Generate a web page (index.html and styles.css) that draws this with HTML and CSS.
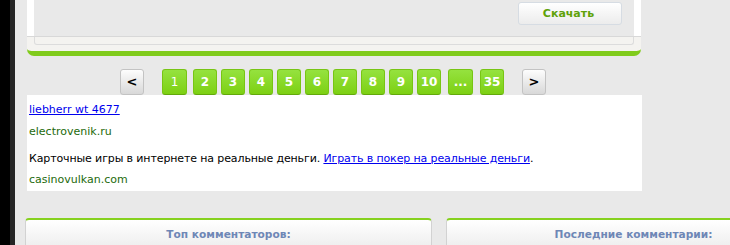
FILE: index.html
```html
<!DOCTYPE html>
<html lang="ru">
<head>
<meta charset="utf-8">
<title>Page</title>
<link rel="stylesheet" href="styles.css">
</head>
<body>
<div class="page">
  <div class="edge"></div>
  <div class="main">
    <div class="panel">
      <div class="panel-body">
        <a class="btn-download" href="#">Скачать</a>
      </div>
      <div class="panel-foot"><div class="panel-foot-box"></div></div>
    </div>

    <div class="pager">
      <a class="pg pg-nav" href="#">&lt;</a>
      <span class="pg pg-green pg-current pg-wide">1</span>
      <a class="pg pg-green pg-after-current" href="#">2</a>
      <a class="pg pg-green" href="#">3</a>
      <a class="pg pg-green" href="#">4</a>
      <a class="pg pg-green" href="#">5</a>
      <a class="pg pg-green" href="#">6</a>
      <a class="pg pg-green" href="#">7</a>
      <a class="pg pg-green" href="#">8</a>
      <a class="pg pg-green" href="#">9</a>
      <a class="pg pg-green" href="#">10</a>
      <span class="pg pg-green pg-dots pg-wide">...</span>
      <a class="pg pg-green pg-spaced" href="#">35</a>
      <a class="pg pg-nav pg-next" href="#">&gt;</a>
    </div>

    <div class="ads">
      <div class="ad">
        <div class="ad-title"><a href="#">liebherr wt 4677</a></div>
        <div class="ad-url">electrovenik.ru</div>
      </div>
      <div class="ad ad-second">
        <div class="ad-title ad-text">Карточные игры в интернете на реальные деньги. <a href="#">Играть в покер на реальные деньги</a>.</div>
        <div class="ad-url">casinovulkan.com</div>
      </div>
    </div>

    <div class="widgets">
      <div class="widget widget-left">
        <div class="widget-title">Топ комментаторов:</div>
      </div>
      <div class="widget widget-right">
        <div class="widget-title">Последние комментарии:</div>
      </div>
    </div>
  </div>
</div>
</body>
</html>
```

FILE: styles.css
```css
html, body {
  margin: 0;
  padding: 0;
  overflow: hidden;
  height: 100%;
}
body {
  background: #e9e9e9;
  font-family: "DejaVu Sans", Verdana, sans-serif;
  font-size: 11px;
  color: #000;
}
.page {
  display: flex;
  min-height: 100%;
}
.edge {
  width: 5px;
  flex: none;
  background: #252525;
  border-left: 10px solid #000;
}
.main {
  flex: none;
  width: 820px;
  padding-left: 10px;
}

/* top panel */
.panel {
  margin-left: 2px;
  width: 614px;
  background: #f4f3f0;
  border-bottom: 5px solid #80cb1c;
  border-radius: 0 0 7px 7px;
}
.panel-body {
  height: 36px;
  box-sizing: border-box;
  background: #e9e9e9;
  border-left: 7px solid #fff;
  border-right: 7px solid #fff;
  display: flex;
  justify-content: flex-end;
  align-items: flex-start;
  padding: 2px 12px 0 0;
}
.panel-foot {
  border-top: 1px solid #d8d8d8;
  height: 15px;
  box-sizing: border-box;
  padding: 0 7px 0 7px;
}
.panel-foot-box {
  height: 7px;
  border: 1px solid #dcdcdc;
  border-top: none;
  border-radius: 0 0 3px 3px;
}
.btn-download {
  display: block;
  width: 104px;
  height: 23px;
  box-sizing: border-box;
  border: 1px solid #d6dce3;
  border-radius: 3px;
  background: linear-gradient(#ffffff, #ececec);
  color: #5fa20a;
  font-weight: bold;
  font-size: 11px;
  line-height: 21px;
  text-align: center;
  text-decoration: none;
  padding-right: 3px;
}

/* pagination */
.pager {
  display: flex;
  margin-top: 13px;
  margin-left: 2px;
  padding-left: 93px;
  gap: 4px;
  height: 26px;
}
.pg {
  display: block;
  flex: none;
  width: 24px;
  height: 26px;
  box-sizing: border-box;
  border-radius: 3px;
  text-align: center;
  line-height: 24px;
  text-decoration: none;
  font-weight: bold;
  font-size: 12px;
}
.pg-green {
  color: #fff;
  background: linear-gradient(#95e23f, #7dd013);
  border: 1px solid #78c514;
  border-bottom-color: #62a90b;
}
.pg-current {
  font-weight: normal;
  margin-left: 14px;
}
.pg-wide {
  width: 25px;
}
.pg-after-current {
  margin-left: 2px;
}
.pg-dots {
  margin-left: 3px;
}
.pg-spaced {
  margin-left: 3px;
}
.pg-nav {
  color: #000;
  background: linear-gradient(#fdfdfd, #d8d8d8);
  border: 1px solid #c3c3c3;
  font-size: 13px;
}
.pg-next {
  margin-left: 14px;
}

/* ads */
.ads {
  margin-left: 2px;
  width: 615px;
  background: #fff;
  padding: 6px 0 2px 2px;
  box-sizing: border-box;
}
.ad-second {
  margin-top: 9px;
}
.ad-title {
  line-height: 18px;
}
.ad-text {
  letter-spacing: -0.12px;
}
.ad-title a {
  color: #0000ee;
}
.ad-url {
  margin-top: 4px;
  line-height: 18px;
  color: #1d6a0b;
}
.ad-second .ad-url {
  margin-top: 3px;
}

/* widgets */
.widgets {
  display: flex;
  gap: 14px;
  margin-top: 27px;
}
.widget {
  flex: none;
  height: 40px;
  box-sizing: border-box;
  border: 1px solid #d2d2d2;
  border-top: 2px solid #86d11f;
  border-radius: 4px 4px 0 0;
  background: linear-gradient(#ffffff, #ececec 30px);
}
.widget-left {
  width: 407px;
}
.widget-right {
  width: 375px;
}
.widget-title {
  padding-top: 8px;
  line-height: 13px;
  text-align: center;
  font-weight: bold;
  font-size: 10.6px;
  color: #6e87b6;
}
```
